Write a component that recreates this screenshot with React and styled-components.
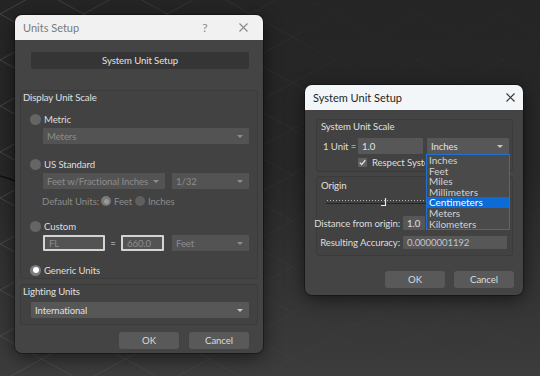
import React from 'react';
import styled, { createGlobalStyle } from 'styled-components';

const Global = createGlobalStyle`
  html, body { margin: 0; padding: 0; background: #262626; }
  * { box-sizing: border-box; }
`;

const Desktop = styled.div`
  position: relative;
  width: 540px;
  height: 376px;
  overflow: hidden;
  background: linear-gradient(180deg, #252525 0%, #272727 45%, #323232 72%, #3c3c3c 100%);
  font-family: Lato, "Noto Sans", sans-serif;
  font-size: 9.6px;
  letter-spacing: -0.1px;
  color: #dcdcdc;
`;

const BackdropSvg = styled.svg`
  position: absolute;
  left: 0;
  top: 0;
`;

const Window = styled.div`
  position: absolute;
  left: ${p => p.$x}px;
  top: ${p => p.$y}px;
  width: ${p => p.$w}px;
  height: ${p => p.$h}px;
  background: #444444;
  border-radius: 7px;
  overflow: hidden;
  display: flex;
  flex-direction: column;
  box-shadow: 0 4px 18px rgba(0, 0, 0, 0.55), 0 0 0 1px rgba(0, 0, 0, 0.3);
`;

const TitleBar = styled.div`
  height: 25px;
  flex: none;
  display: flex;
  align-items: center;
  padding-left: 8px;
  background: ${p => (p.$active ? '#f3f6f8' : '#f1f1f1')};
  color: ${p => (p.$active ? '#1e1e1e' : '#7a7a7a')};
  font-size: 11px;
  letter-spacing: 0;
`;

const TitleText = styled.div`
  flex: 1;
`;

const TitleButtons = styled.div`
  display: flex;
  gap: 12px;
  padding-right: ${p => p.$pr}px;
`;

const TitleBtn = styled.div`
  width: 26px;
  height: 25px;
  display: flex;
  align-items: center;
  justify-content: center;
  color: ${p => p.$color};
  font-size: 12px;
`;

const Body = styled.div`
  flex: 1;
  display: flex;
  flex-direction: column;
  padding: ${p => p.$pad};
`;

const WideButton = styled.div`
  height: 17px;
  margin: 0 9px 0 11px;
  background: #353535;
  border-radius: 2px;
  display: flex;
  align-items: center;
  justify-content: center;
  color: #e2e2e2;
`;

const Group = styled.div`
  margin-top: ${p => p.$mt}px;
  padding: ${p => p.$pad};
  border: 1px solid #3b3b3b;
  border-radius: 3px;
  background: #424242;
  display: flex;
  flex-direction: column;
`;

const GroupTitle = styled.div`
  line-height: 12px;
  height: 12px;
  margin-left: ${p => p.$ml}px;
  color: #e0e0e0;
`;

const Row = styled.div`
  display: flex;
  align-items: center;
  height: ${p => p.$h}px;
  margin-top: ${p => p.$mt || 0}px;
  margin-left: ${p => p.$ml || 0}px;
  margin-right: ${p => p.$mr || 0}px;
  gap: ${p => p.$gap || 0}px;
  flex: ${p => (p.$grow ? 1 : 'none')};
`;

const RadioDot = styled.span`
  flex: none;
  width: ${p => p.$size}px;
  height: ${p => p.$size}px;
  border-radius: 50%;
  background: ${p => p.$bg};
  display: flex;
  align-items: center;
  justify-content: center;
  &::after {
    content: '';
    display: ${p => (p.$on ? 'block' : 'none')};
    width: ${p => p.$size - 5}px;
    height: ${p => p.$size - 5}px;
    border-radius: 50%;
    background: ${p => p.$dot};
  }
`;

const Label = styled.span`
  color: ${p => (p.$dim ? '#8b8b8b' : '#dedede')};
  white-space: nowrap;
  overflow: hidden;
  width: ${p => (p.$w ? `${p.$w}px` : 'auto')};
  flex: none;
  text-align: ${p => p.$align || 'left'};
  margin-left: ${p => p.$ml || 0}px;
`;

const Field = styled.div`
  position: relative;
  height: ${p => p.$h || 16}px;
  width: ${p => (p.$w ? `${p.$w}px` : 'auto')};
  flex: ${p => (p.$w ? 'none' : '1')};
  margin-left: ${p => p.$ml || 0}px;
  background: ${p => (p.$disabled ? '#535353' : '#575757')};
  color: ${p => (p.$disabled ? '#8c8c8c' : p.$soft ? '#c4c4c4' : '#e0e0e0')};
  border-radius: 1px;
  display: flex;
  align-items: center;
  padding: 0 4px;
  white-space: nowrap;
  border: ${p => (p.$outlined ? '2px solid #d4d4d4' : 'none')};
`;

const Caret = styled.span`
  position: absolute;
  right: 6px;
  top: 50%;
  margin-top: -1px;
  width: 0;
  height: 0;
  border-left: 3px solid transparent;
  border-right: 3px solid transparent;
  border-top: 3px solid ${p => (p.$disabled ? '#8e8e8e' : '#c8c8c8')};
`;

const Equals = styled.span`
  flex: none;
  width: 16px;
  text-align: center;
  color: #dedede;
`;

const CheckBox = styled.span`
  flex: none;
  width: 9px;
  height: 9px;
  background: #606060;
  border-radius: 1px;
  display: flex;
  align-items: center;
  justify-content: center;
`;

const ButtonRow = styled.div`
  display: flex;
  justify-content: flex-end;
  gap: ${p => p.$gap}px;
  margin-top: ${p => p.$mt}px;
  margin-right: ${p => p.$mr}px;
`;

const Button = styled.div`
  width: 60px;
  height: 17px;
  background: #595959;
  border-radius: 3px;
  display: flex;
  align-items: center;
  justify-content: center;
  color: #dcdcdc;
`;

const DropList = styled.div`
  position: absolute;
  left: -1px;
  right: -1px;
  top: 100%;
  z-index: 5;
  background: #4a4a4a;
  border: 1px solid #1f72d0;
  display: flex;
  flex-direction: column;
  font-size: 10px;
  letter-spacing: 0;
`;

const DropItem = styled.div`
  height: 10.6px;
  line-height: 10.6px;
  padding-left: 2px;
  color: ${p => (p.$sel ? '#ffffff' : '#d2d2d2')};
  background: ${p => (p.$sel ? '#0c6bd6' : 'transparent')};
`;

const SliderSvg = styled.svg`
  display: block;
  margin-top: 5px;
  margin-left: 9px;
`;

const CloseIcon = ({ color }) => (
  <svg width="9" height="9" viewBox="0 0 9 9">
    <path d="M0.5 0.5 L8.5 8.5 M8.5 0.5 L0.5 8.5" stroke={color} strokeWidth="1.1" fill="none" />
  </svg>
);

const Backdrop = () => {
  const lines = [];
  for (let c = -400; c < 700; c += 46) {
    lines.push(<line key={`a${c}`} x1={0} y1={c} x2={540} y2={c + 297} />);
    lines.push(<line key={`b${c}`} x1={0} y1={c} x2={540} y2={c - 297} />);
  }
  return (
    <BackdropSvg width="540" height="376" viewBox="0 0 540 376">
      <defs>
        <linearGradient id="fade" gradientUnits="userSpaceOnUse" x1="0" y1="0" x2="330" y2="0">
          <stop offset="0" stopColor="#5a5a5a" stopOpacity="0.55" />
          <stop offset="1" stopColor="#5a5a5a" stopOpacity="0.05" />
        </linearGradient>
      </defs>
      <g stroke="url(#fade)" strokeWidth="1">{lines}</g>
      <path d="M0 176 Q8 178 15 181" stroke="#111" strokeWidth="1.5" fill="none" />
    </BackdropSvg>
  );
};

const Radio = ({ on, size = 11, bg = '#656565', dot = '#f2f2f2', label, dim, gap = 3, ml = 9, mt, h = 14 }) => (
  <Row $h={h} $mt={mt} $ml={ml} $gap={gap}>
    <RadioDot $size={size} $bg={bg} $on={on} $dot={dot} />
    <Label $dim={dim}>{label}</Label>
  </Row>
);

const Select = ({ value, w, disabled, h, children }) => (
  <Field $w={w} $h={h} $disabled={disabled}>
    {value}
    <Caret $disabled={disabled} />
    {children}
  </Field>
);

const units = ['Inches', 'Feet', 'Miles', 'Millimeters', 'Centimeters', 'Meters', 'Kilometers'];

const UnitsSetup = () => (
  <Window $x={15} $y={15} $w={248} $h={338}>
    <TitleBar>
      <TitleText>Units Setup</TitleText>
      <TitleButtons $pr={7}>
        <TitleBtn $color="#8a8a8a">?</TitleBtn>
        <TitleBtn><CloseIcon color="#8a8a8a" /></TitleBtn>
      </TitleButtons>
    </TitleBar>
    <Body $pad="12px 5px 0 5px">
      <WideButton>System Unit Setup</WideButton>
      <Group $mt={21} $pad="1px 8px 1px 0">
        <GroupTitle $ml={2}>Display Unit Scale</GroupTitle>
        <Radio label="Metric" mt={8} />
        <Row $h={16} $mt={2} $ml={22}>
          <Select value="Meters" disabled />
        </Row>
        <Radio label="US Standard" mt={13} />
        <Row $h={16} $mt={2} $ml={22} $gap={7}>
          <Select value="Feet w/Fractional Inches" w={122} disabled />
          <Select value="1/32" disabled />
        </Row>
        <Row $h={14} $mt={5} $ml={21}>
          <Label $dim $w={59}>Default Units:</Label>
          <RadioDot $size={10} $bg="#7a7a7a" $on $dot="#9a9a9a" />
          <Label $dim $w={21} $ml={3}>Feet</Label>
          <RadioDot $size={10} $bg="#5f5f5f" />
          <Label $dim $ml={3}>Inches</Label>
        </Row>
        <Radio label="Custom" mt={11} />
        <Row $h={16} $mt={2} $ml={22}>
          <Field $w={62} $outlined $disabled>FL</Field>
          <Equals>=</Equals>
          <Field $w={43} $outlined $disabled>660.0</Field>
          <Row $h={16} $ml={8} $grow>
            <Select value="Feet" disabled />
          </Row>
        </Row>
        <Radio label="Generic Units" mt={12} on bg="#7d7d7d" dot="#ffffff" />
      </Group>
      <Group $mt={5} $pad="1px 8px 6px 0">
        <GroupTitle $ml={2}>Lighting Units</GroupTitle>
        <Row $h={16} $mt={4} $ml={10}>
          <Select value="International" />
        </Row>
      </Group>
      <ButtonRow $gap={10} $mt={7} $mr={9}>
        <Button>OK</Button>
        <Button>Cancel</Button>
      </ButtonRow>
    </Body>
  </Window>
);

const Slider = () => {
  const dots = [];
  for (let x = 1; x < 108; x += 3) dots.push(<rect key={x} x={x} y={3} width={1} height={1} fill="#b8b8b8" />);
  return (
    <SliderSvg width="110" height="10" viewBox="0 0 110 10">
      {dots}
      <rect x="0" y="6" width="110" height="1" fill="#262626" />
      <path d="M59.5 1 V8.5 H55" stroke="#e6e6e6" strokeWidth="1.2" fill="none" />
    </SliderSvg>
  );
};

const SystemUnitSetup = () => (
  <Window $x={305} $y={85} $w={218} $h={210}>
    <TitleBar $active>
      <TitleText>System Unit Setup</TitleText>
      <TitleButtons $pr={0}>
        <TitleBtn><CloseIcon color="#333" /></TitleBtn>
      </TitleButtons>
    </TitleBar>
    <Body $pad="9px 10px 8px 11px">
      <Group $mt={0} $pad="1px 3px 3px 0">
        <GroupTitle $ml={4}>System Unit Scale</GroupTitle>
        <Row $h={16} $mt={5} $ml={6} $gap={0}>
          <Label $w={35}>1 Unit =</Label>
          <Field $w={65} $h={16}>1.0</Field>
          <Row $h={16} $ml={4}>
            <Select value="Inches" w={82}>
              <DropList>
                {units.map(u => (
                  <DropItem key={u} $sel={u === 'Centimeters'}>{u}</DropItem>
                ))}
              </DropList>
            </Select>
          </Row>
        </Row>
        <Row $h={11} $mt={3} $ml={41} $gap={5}>
          <CheckBox>
            <svg width="7" height="7" viewBox="0 0 7 7">
              <path d="M0.8 3.6 L2.7 5.6 L6.3 1.2" stroke="#e8e8e8" strokeWidth="1.3" fill="none" />
            </svg>
          </CheckBox>
          <Label $w={53}>Respect System Units in Files</Label>
        </Row>
      </Group>
      <Group $mt={4} $pad="3px 3px 6px 0">
        <GroupTitle $ml={4}>Origin</GroupTitle>
        <Slider />
        <Row $h={14} $mt={9} $ml={-4}>
          <Label $w={87} $align="right">Distance from origin:</Label>
          <Field $w={22} $h={14} $ml={3}>1.0</Field>
        </Row>
        <Row $h={13} $mt={6} $ml={-4}>
          <Label $w={87} $align="right">Resulting Accuracy:</Label>
          <Field $w={104} $h={13} $ml={3} $soft>0.0000001192</Field>
        </Row>
      </Group>
      <ButtonRow $gap={9} $mt={15} $mr={-1}>
        <Button>OK</Button>
        <Button>Cancel</Button>
      </ButtonRow>
    </Body>
  </Window>
);

export default function App() {
  return (
    <>
      <Global />
      <Desktop>
        <Backdrop />
        <UnitsSetup />
        <SystemUnitSetup />
      </Desktop>
    </>
  );
}
